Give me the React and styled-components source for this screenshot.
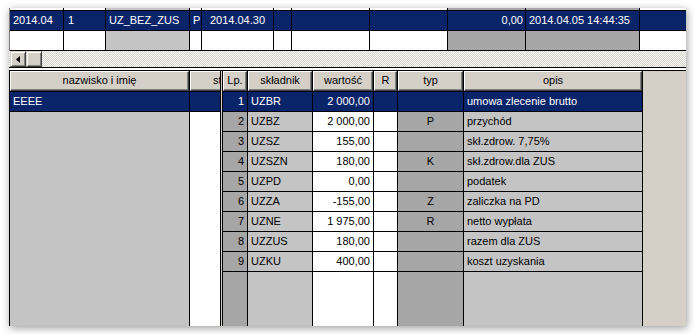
import React from 'react'
import styled, { createGlobalStyle } from 'styled-components'

const NAVY = '#0a246a'
const FACE = '#d4d0c8'
const LIGHT = '#c4c4c4'
const DARK = '#a6a6a6'

const GlobalStyle = createGlobalStyle`
  html, body { margin:0; padding:0; background:#fff; }
  body {
    font-family:"Liberation Sans", Arial, sans-serif;
    font-size:11px;
    color:#000;
  }
`

const Page = styled.div`
  padding:8px 0 0 9px;
  width:694px;
  height:334px;
  box-sizing:border-box;
`

const Window = styled.div`
  width:677px;
  height:318px;
  background:${FACE};
  box-shadow:1px 2px 8px rgba(0,0,0,0.4);
  display:flex;
  flex-direction:column;
  overflow:hidden;
`

/* ---------- top grid ---------- */
const TopGrid = styled.div`
  display:grid;
  grid-template-columns:54px 42px 84px 12px 72px 18px 78px 78px 78px 114px 1fr;
  grid-template-rows:3px 20px 20px;
  border-left:1px solid #808080;
`

const TopCell = styled.div`
  background:${p => p.$bg || '#fff'};
  color:${p => p.$sel ? '#fff' : '#000'};
  border-right:${p => p.$last ? 'none' : '1px solid #000'};
  border-bottom:1px solid #000;
  padding:0 ${p => p.$pad ?? 3}px;
  text-align:${p => p.$align || 'left'};
  line-height:19px;
  white-space:nowrap;
  overflow:hidden;
`

/* ---------- scrollbar ---------- */
const HScroll = styled.div`
  height:16px;
  display:flex;
  border-bottom:1px solid #000;
  background:repeating-conic-gradient(${FACE} 0 25%, #fff 0 50%) 0 0 / 2px 2px;
`

const ScrollBtn = styled.div`
  width:16px;
  height:16px;
  box-sizing:border-box;
  background:${FACE};
  border-top:1px solid ${FACE};
  border-left:1px solid ${FACE};
  border-right:1px solid #404040;
  border-bottom:1px solid #404040;
  box-shadow:inset 1px 1px 0 #fff, inset -1px -1px 0 #808080;
  display:flex;
  align-items:center;
  justify-content:center;
  margin-left:${p => p.$first ? '1px' : '0'};
`

const Gap = styled.div`
  height:2px;
  background:#fff;
`

/* ---------- lower panel ---------- */
const Lower = styled.div`
  flex:1;
  display:flex;
  border-top:1px solid #000;
  min-height:0;
`

const LeftPanel = styled.div`
  width:210px;
  border-left:1px solid #000;
  border-right:1px solid #000;
  overflow:hidden;
  flex:none;
`

const Splitter = styled.div`
  width:1px;
  background:${FACE};
  flex:none;
`

const RightPanel = styled.div`
  flex:1;
  border-left:1px solid #000;
  overflow:hidden;
`

const DataGrid = styled.div`
  display:grid;
  grid-template-columns:${p => p.$cols};
  grid-template-rows:21px repeat(9, 20px) 1fr;
  height:100%;
  width:${p => p.$width || 'auto'};
`

const HeadCell = styled.div`
  border-right:1px solid #000;
  border-bottom:1px solid #000;
  display:flex;
  min-width:0;
`

const HeadBtn = styled.div`
  flex:1;
  background:${FACE};
  border-top:1px solid #fff;
  border-left:1px solid #fff;
  border-right:1px solid #404040;
  border-bottom:1px solid #404040;
  box-shadow:inset -1px -1px 0 #808080;
  text-align:${p => p.$indent ? 'left' : 'center'};
  padding-left:${p => p.$indent || 0}px;
  line-height:17px;
  white-space:nowrap;
  overflow:hidden;
`

const Filler = styled.div`
  background:${FACE};
`

const Cell = styled.div`
  background:${p => p.$sel ? NAVY : p.$bg};
  color:${p => p.$sel ? '#fff' : '#000'};
  border-right:1px solid #000;
  border-bottom:${p => p.$open ? 'none' : '1px solid #000'};
  padding:0 3px;
  text-align:${p => p.$align || 'left'};
  line-height:19px;
  white-space:nowrap;
  overflow:hidden;
`

const topRow = [
  { t: '2014.04' },
  { t: '1', pad: 4 },
  { t: 'UZ_BEZ_ZUS', bg: LIGHT },
  { t: 'P' },
  { t: '2014.04.30', align: 'center' },
  { t: '' },
  { t: '' },
  { t: '' },
  { t: '0,00', align: 'right', pad: 2, bg: DARK },
  { t: '2014.04.05 14:44:35', bg: DARK },
  { t: '', last: true },
]

const rightCols = [
  { h: 'Lp.', k: 'lp', bg: DARK, align: 'right' },
  { h: 'składnik', k: 'sk', bg: LIGHT },
  { h: 'wartość', k: 'w', bg: '#fff', align: 'right' },
  { h: 'R', k: 'r', bg: '#fff' },
  { h: 'typ', k: 'typ', bg: DARK, align: 'center' },
  { h: 'opis', k: 'op', bg: LIGHT },
]

const rows = [
  { lp: '1', sk: 'UZBR', w: '2 000,00', typ: '', op: 'umowa zlecenie brutto' },
  { lp: '2', sk: 'UZBZ', w: '2 000,00', typ: 'P', op: 'przychód' },
  { lp: '3', sk: 'UZSZ', w: '155,00', typ: '', op: 'skł.zdrow. 7,75%' },
  { lp: '4', sk: 'UZSZN', w: '180,00', typ: 'K', op: 'skł.zdrow.dla ZUS' },
  { lp: '5', sk: 'UZPD', w: '0,00', typ: '', op: 'podatek' },
  { lp: '6', sk: 'UZZA', w: '-155,00', typ: 'Z', op: 'zaliczka na PD' },
  { lp: '7', sk: 'UZNE', w: '1 975,00', typ: 'R', op: 'netto wypłata' },
  { lp: '8', sk: 'UZZUS', w: '180,00', typ: '', op: 'razem dla ZUS' },
  { lp: '9', sk: 'UZKU', w: '400,00', typ: '', op: 'koszt uzyskania' },
]

const leftCols = [
  { h: 'nazwisko i imię', bg: LIGHT },
  { h: 'st', bg: '#fff', indent: 22 },
]

export default function App() {
  return (
    <Page>
      <GlobalStyle />
      <Window>
        <TopGrid>
          {topRow.map((c, i) => (
            <TopCell key={'p' + i} $bg={c.bg} $last={c.last} />
          ))}
          {topRow.map((c, i) => (
            <TopCell key={'s' + i} $bg={NAVY} $sel $align={c.align} $pad={c.pad} $last={c.last}>
              {c.t}
            </TopCell>
          ))}
          {topRow.map((c, i) => (
            <TopCell key={'e' + i} $bg={c.bg} $last={c.last} />
          ))}
        </TopGrid>

        <HScroll>
          <ScrollBtn $first>
            <svg width="4" height="7" viewBox="0 0 4 7">
              <path d="M4 0 L4 7 L0 3.5 Z" fill="#000" />
            </svg>
          </ScrollBtn>
          <ScrollBtn />
        </HScroll>
        <Gap />

        <Lower>
          <LeftPanel>
            <DataGrid $cols="180px 100px" $width="280px">
              {leftCols.map(c => (
                <HeadCell key={c.h}><HeadBtn $indent={c.indent}>{c.h}</HeadBtn></HeadCell>
              ))}
              <Cell $sel>EEEE</Cell>
              <Cell $sel />
              {Array.from({ length: 8 }).map((_, r) =>
                leftCols.map((c, i) => (
                  <Cell key={r + '-' + i} $bg={c.bg} $open />
                ))
              )}
              {leftCols.map((c, i) => (
                <Cell key={'f' + i} $bg={c.bg} $open />
              ))}
            </DataGrid>
          </LeftPanel>
          <Splitter />
          <RightPanel>
            <DataGrid $cols="25px 65px 61px 24px 66px 179px 1fr">
              {rightCols.map(c => (
                <HeadCell key={c.k}><HeadBtn>{c.h}</HeadBtn></HeadCell>
              ))}
              <Filler />
              {rows.map((row, r) => (
                <React.Fragment key={row.lp}>
                  {rightCols.map(c => (
                    <Cell key={c.k} $bg={c.bg} $sel={r === 0} $align={c.align}>
                      {row[c.k]}
                    </Cell>
                  ))}
                  <Filler />
                </React.Fragment>
              ))}
              {rightCols.map(c => (
                <Cell key={'f' + c.k} $bg={c.bg} $open />
              ))}
              <Filler />
            </DataGrid>
          </RightPanel>
        </Lower>
      </Window>
    </Page>
  )
}
